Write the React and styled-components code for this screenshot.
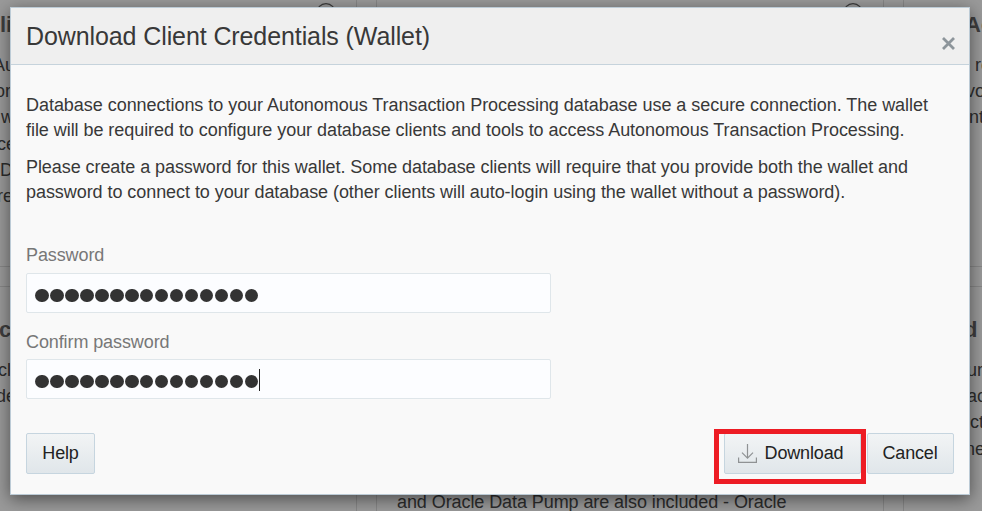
import React from "react";
import styled, { createGlobalStyle } from "styled-components";

const Global = createGlobalStyle`
  * { box-sizing: border-box; }
  html, body { margin: 0; width: 982px; height: 511px; overflow: hidden; }
  body { font-family: "Liberation Sans", Arial, sans-serif; color: #383838; background: #9a9a9a; }
  p, h1, h2 { margin: 0; }
`;

const Page = styled.div`
  position: relative;
  width: 982px;
  height: 511px;
  overflow: hidden;
`;

const CardGrid = styled.div`
  display: grid;
  grid-template-columns: 507px 508px 507px;
  grid-template-rows: 287px 400px;
  gap: 19px;
  margin: -20px 0 0 -150px;
  width: 1560px;
`;

const Card = styled.section`
  border: 1px solid #878787;
  padding: ${(p) => p.$top}px 20px 0 ${(p) => p.$inset || 0}px;
`;

const CardHeader = styled.div`
  display: flex;
  justify-content: space-between;
  align-items: flex-start;
  height: 49px;
`;

const CardTitle = styled.h2`
  font-size: 22px;
  line-height: 26px;
  padding-top: 9px;
  color: #3e3e3e;
  white-space: nowrap;
  text-indent: ${(p) => p.$indent || 0}px;
`;

const CardLine = styled.p`
  font-size: 18px;
  line-height: 26.2px;
  height: 26.2px;
  color: #2c2c2c;
  white-space: nowrap;
  text-indent: ${(p) => p.$indent || 0}px;
  letter-spacing: -0.08px;
`;

const Dialog = styled.div`
  position: absolute;
  left: 10px;
  top: 7px;
  width: 960px;
  height: 488px;
  border: 1px solid #bccbd6;
  background: #f9f9f9;
  box-shadow: 0 4px 16px rgba(0, 0, 0, 0.5);
`;

const Header = styled.header`
  display: flex;
  justify-content: space-between;
  height: 57px;
  padding: 12px 14px 0 15px;
  background: #efefef;
  border-bottom: 1px solid #c6d3dc;
`;

const Title = styled.h1`
  font-size: 25px;
  font-weight: 400;
  line-height: 33px;
  letter-spacing: -0.1px;
`;

const Close = styled.button`
  border: 0;
  background: none;
  padding: 0;
  width: 13px;
  height: 13px;
  margin-top: 17px;
  display: flex;
`;

const Body = styled.main`
  padding: 28px 15px 0;
`;

const Paragraph = styled.p`
  margin-bottom: 12px;
`;

const Line = styled.span`
  display: block;
  font-size: 18px;
  line-height: 25px;
  letter-spacing: ${(p) => p.$track}px;
  white-space: nowrap;
`;

const Fields = styled.div`
  padding-top: 26px;
`;

const Field = styled.div`
  height: ${(p) => p.$height}px;
`;

const Label = styled.div`
  font-size: 18px;
  line-height: 24px;
  height: ${(p) => p.$height}px;
  color: #777;
  letter-spacing: -0.1px;
`;

const Input = styled.div`
  display: flex;
  align-items: center;
  width: 525px;
  height: 40px;
  padding: 5px 0 0 8px;
  border: 1px solid #dfe6ea;
  border-radius: 2px;
  background: #fcfdff;
`;

const Dot = styled.i`
  width: 13.6px;
  height: 13.6px;
  margin-right: 1.4px;
  border-radius: 50%;
  background: #333;
`;

const Caret = styled.i`
  width: 1px;
  height: 22px;
  margin: -3px 0 0 -1px;
  background: #222;
`;

const Footer = styled.footer`
  display: flex;
  padding: 0 15px;
  align-items: flex-start;
`;

const Button = styled.button`
  display: flex;
  align-items: center;
  justify-content: center;
  gap: 8px;
  width: ${(p) => p.$width}px;
  height: 41px;
  padding: 0 ${(p) => p.$trim || 0}px 0 0;
  border: 1px solid #c6d5df;
  border-radius: 2px;
  background: linear-gradient(#f2f4f5, #e0e6ea);
  font: 18px "Liberation Sans", Arial, sans-serif;
  letter-spacing: -0.15px;
  color: #222;
`;

const PrimaryGroup = styled.div`
  display: flex;
  gap: 6px;
  margin-left: auto;
`;

const Highlight = styled.div`
  position: absolute;
  left: 703px;
  top: 421px;
  width: 152px;
  height: 55px;
  border: 5px solid #ed1c24;
`;

const InfoCircle = () => (
  <svg width="20" height="20" viewBox="0 0 20 20">
    <circle cx="10" cy="10" r="9.3" fill="none" stroke="#3c3c3c" strokeWidth="1.2" />
  </svg>
);

const CloseIcon = () => (
  <svg width="13" height="13" viewBox="0 0 13 13" stroke="#8d959b" strokeWidth="2.8">
    <path d="M1 1 12 12M12 1 1 12" />
  </svg>
);

const DownloadIcon = () => (
  <svg width="19" height="19" viewBox="0 0 19 19" fill="none" stroke="#8f9294" strokeWidth="1.2">
    <path d="M.6 13.5v4.8h17.8v-4.8M9.5 0v14M4 8.7l5.5 5.5L15 8.7" />
  </svg>
);

const Dots = () => Array.from({ length: 15 }, (_, i) => <Dot key={i} />);

export default function App() {
  return (
    <>
      <Global />
      <Page>
        <CardGrid>
          <Card $inset={149} $top={22}>
            <CardHeader>
              <CardTitle>li</CardTitle>
              <InfoCircle />
            </CardHeader>
            <CardLine $indent={-7}>Au</CardLine>
            <CardLine $indent={-5}>or</CardLine>
            <CardLine $indent={1}>w</CardLine>
            <CardLine $indent={-3}>ce</CardLine>
            <CardLine>D</CardLine>
            <CardLine $indent={-3}>re</CardLine>
          </Card>
          <Card $top={22}>
            <CardHeader>
              <CardTitle />
              <InfoCircle />
            </CardHeader>
          </Card>
          <Card $inset={64} $top={22}>
            <CardHeader>
              <CardTitle $indent={-3}>Ac</CardTitle>
            </CardHeader>
            <CardLine $indent={7}>re</CardLine>
            <CardLine $indent={-2}>vo</CardLine>
            <CardLine $indent={1}>nt</CardLine>
          </Card>
          <Card $inset={149} $top={21}>
            <CardHeader>
              <CardTitle $indent={-1}>c</CardTitle>
            </CardHeader>
            <CardLine $indent={-2}>cl</CardLine>
            <CardLine $indent={-4}>de</CardLine>
          </Card>
          <Card $inset={20} $top={202}>
            <CardLine>and Oracle Data Pump are also included - Oracle</CardLine>
          </Card>
          <Card $inset={64} $top={21}>
            <CardHeader>
              <CardTitle $indent={-4}>d</CardTitle>
            </CardHeader>
            <CardLine $indent={-1}>ur</CardLine>
            <CardLine $indent={-1}>ac</CardLine>
            <CardLine $indent={2}>ct</CardLine>
            <CardLine $indent={-3}>ne</CardLine>
          </Card>
        </CardGrid>
        <Dialog>
          <Header>
            <Title>Download Client Credentials (Wallet)</Title>
            <Close aria-label="Close">
              <CloseIcon />
            </Close>
          </Header>
          <Body>
            <Paragraph>
              <Line $track={-0.04}>
                Database connections to your Autonomous Transaction Processing database use a secure connection. The wallet
              </Line>
              <Line $track={-0.054}>
                file will be required to configure your database clients and tools to access Autonomous Transaction Processing.
              </Line>
            </Paragraph>
            <Paragraph>
              <Line $track={-0.067}>
                Please create a password for this wallet. Some database clients will require that you provide both the wallet and
              </Line>
              <Line $track={-0.06}>
                password to connect to your database (other clients will auto-login using the wallet without a password).
              </Line>
            </Paragraph>
            <Fields>
              <Field $height={87}>
                <Label $height={30}>Password</Label>
                <Input>
                  <Dots />
                </Input>
              </Field>
              <Field $height={103}>
                <Label $height={29}>Confirm password</Label>
                <Input>
                  <Dots />
                  <Caret />
                </Input>
              </Field>
            </Fields>
          </Body>
          <Footer>
            <Button $width={69}>Help</Button>
            <PrimaryGroup>
              <Button $width={137} $trim={4}>
                <DownloadIcon />
                Download
              </Button>
              <Button $width={87} $trim={1}>Cancel</Button>
            </PrimaryGroup>
          </Footer>
          <Highlight />
        </Dialog>
      </Page>
    </>
  );
}
